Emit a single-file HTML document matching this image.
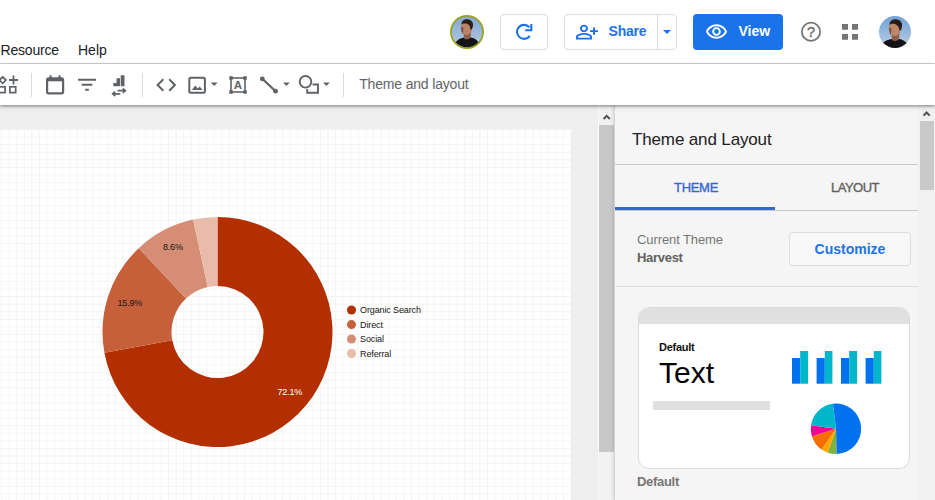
<!DOCTYPE html>
<html>
<head>
<meta charset="utf-8">
<title>Theme and Layout</title>
<style>
*{box-sizing:border-box;margin:0;padding:0}
html,body{width:935px;height:500px;overflow:hidden;background:#fff;font-family:"Liberation Sans",sans-serif;}
#root{position:relative;width:935px;height:500px;overflow:hidden;background:#fff}
.abs{position:absolute}
#topbar{left:0;top:0;width:935px;height:64px;background:#fff;border-bottom:1px solid #dadce0}
.menu{top:42.400px;font-size:14px;color:#202124;line-height:16px;white-space:nowrap}
#toolbar{left:0;top:64px;width:935px;height:41px;background:#fff;box-shadow:0 1px 3px rgba(0,0,0,.45),0 2px 6px rgba(0,0,0,.08);z-index:5}
.sep{width:1px;background:#dadce0;top:9px;height:24px}
#work{left:0;top:105px;width:599px;height:395px;background:#eeeeee}
#canvas{left:0;top:129px;width:571px;height:371px;background-color:#fff;
 background-image:linear-gradient(#f4f4f4 1px,transparent 1px),linear-gradient(90deg,#f4f4f4 1px,transparent 1px);
 background-size:7.600px 7.600px;background-position:1px 0}
#vscroll{left:598px;top:105px;width:16px;height:395px;background:#f1f1f1;border-left:1px solid #fafafa}
#vthumb{left:599px;top:125px;width:15px;height:327px;background:#c8c8c8}
#panel{left:614px;top:105px;width:304px;height:395px;background:#f5f5f5;border-left:1px solid #d4d4d4;box-shadow:-1px 0 3px rgba(0,0,0,.12)}
#pscroll{left:918px;top:105px;width:17px;height:395px;background:#f1f1f1}
#pthumb{left:919.500px;top:121px;width:14.200px;height:68.600px;background:#c9c9c9}
.btn{border:1px solid #dadce0;border-radius:4px;background:#fff}
</style>
</head>
<body>
<div id="root">
  <div id="topbar" class="abs"></div>
  <div class="abs menu" style="left:0.500px;letter-spacing:-0.200px">Resource</div>
  <div class="abs menu" style="left:78px">Help</div>

  <!-- avatar 1 -->
  <svg class="abs" style="left:450px;top:15px" width="34" height="34" viewBox="0 0 34 34">
    <defs>
      <linearGradient id="sky1" x1="0" y1="0" x2="0" y2="1"><stop offset="0" stop-color="#7fa6d3"/><stop offset="1" stop-color="#b7cbe0"/></linearGradient>
      <clipPath id="c1"><circle cx="17" cy="17" r="15.200"/></clipPath>
    </defs>
    <circle cx="17" cy="17" r="17" fill="#9aa21c"/>
    <g clip-path="url(#c1)">
      <rect width="34" height="34" fill="url(#sky1)"/>
      <path d="M4 34C4 26 9 23.500 14 22.500L21 22.500C27 24 29.500 27 30 34Z" fill="#141416"/>
      <path d="M13.500 17L14 23.500Q17 25.500 20.500 23L21 16Z" fill="#8f5e48"/>
      <ellipse cx="16.500" cy="12.800" rx="5.600" ry="7.200" fill="#b98468"/>
      <path d="M11.400 9.500C11.300 4.500 17 3.200 20.500 5.200C23.800 7 23.500 11 21.800 14.500L20.300 14.500C20.500 12 19.500 10 17 8.800C14.500 8 12.500 8.500 11.400 9.500Z" fill="#2a1d17"/>
      <path d="M11.200 11.500C11 14 11.300 17 12.800 19.200L13.500 13Z" fill="#7a4f3d"/>
    </g>
  </svg>

  <!-- refresh button -->
  <div class="abs btn" style="left:500px;top:14px;width:48px;height:36px"></div>
  <svg class="abs" style="left:512px;top:20px" width="24" height="24" viewBox="512 20 24 24" fill="none" stroke="#1a73e8" stroke-width="2.100"><path d="M529.300 27.300A7 7 0 1 0 529.800 35.800"/><path d="M531.300 24V30.300H525.200"/></svg>

  <!-- share button -->
  <div class="abs btn" style="left:564px;top:14px;width:113px;height:36px"></div>
  <div class="abs" style="left:657px;top:15px;width:1px;height:34px;background:#dadce0"></div>
  <svg class="abs" style="left:575px;top:20.600px" width="24" height="22.200" viewBox="0 0 24 24" preserveAspectRatio="none"><path fill="#1a73e8" d="M9 12c2.21 0 4-1.79 4-4s-1.790-4-4-4-4 1.790-4 4 1.790 4 4 4zm0-6c1.100 0 2 .9 2 2s-.9 2-2 2-2-.9-2-2 .9-2 2-2zm0 7c-2.670 0-8 1.340-8 4v3h16v-3c0-2.660-5.330-4-8-4zm6 5H3v-.99C3.200 16.290 6.300 15 9 15s5.800 1.290 6 2v1zm5-8V7h-2v3h-3v2h3v3h2v-3h3v-2h-3z"/></svg>
  <div class="abs" style="left:608.500px;top:22px;font-size:14px;font-weight:bold;color:#1a73e8;line-height:18px;letter-spacing:-0.200px">Share</div>
  <div class="abs" style="left:663px;top:30px;width:0;height:0;border-left:4px solid transparent;border-right:4px solid transparent;border-top:4px solid #1a73e8"></div>

  <!-- view button -->
  <div class="abs" style="left:693px;top:14px;width:90px;height:36px;border-radius:4px;background:#1a73e8"></div>
  <svg class="abs" style="left:705.400px;top:20.200px" width="23" height="23" viewBox="0 0 24 24"><path fill="#fff" d="M12 6.500c3.790 0 7.170 2.130 8.820 5.500-1.650 3.370-5.020 5.500-8.820 5.500S4.830 15.370 3.180 12C4.830 8.630 8.210 6.500 12 6.500m0-2C7 4.500 2.730 7.610 1 12c1.730 4.390 6 7.500 11 7.500s9.270-3.110 11-7.500c-1.730-4.390-6-7.500-11-7.500zm0 5a2.500 2.500 0 0 1 0 5 2.500 2.500 0 0 1 0-5m0-2c-2.480 0-4.500 2.020-4.500 4.500s2.020 4.500 4.500 4.500 4.500-2.020 4.500-4.500-2.020-4.500-4.500-4.500z"/></svg>
  <div class="abs" style="left:738.500px;top:22px;font-size:14px;font-weight:bold;color:#fff;line-height:18px">View</div>

  <!-- help -->
  <svg class="abs" style="left:799px;top:20px" width="24" height="24" viewBox="799 20 24 24"><circle cx="811" cy="31.700" r="9.100" fill="none" stroke="#757575" stroke-width="1.800"/><text x="811" y="37" text-anchor="middle" font-family="Liberation Sans, sans-serif" font-size="14.500" fill="#757575" stroke="#757575" stroke-width="0.500">?</text></svg>
  <!-- apps -->
  <svg class="abs" style="left:840px;top:22px" width="20" height="20" viewBox="840 22 20 20"><path fill="#757575" d="M842 23.900h6v5.800h-6zM852 23.900h6v5.800h-6zM842 33.900h6v5.800h-6zM852 33.900h6v5.800h-6z"/></svg>

  <!-- avatar 2 -->
  <svg class="abs" style="left:879px;top:16px" width="32" height="32" viewBox="0 0 32 32">
    <defs>
      <linearGradient id="sky2" x1="0" y1="0" x2="0" y2="1"><stop offset="0" stop-color="#6fa2d9"/><stop offset="1" stop-color="#bdd0e2"/></linearGradient>
      <clipPath id="c2"><circle cx="16" cy="16" r="16"/></clipPath>
    </defs>
    <g clip-path="url(#c2)">
      <rect width="32" height="32" fill="url(#sky2)"/>
      <path d="M2 32C2.500 26 7 24 12.500 23L20.500 23C26 24.500 29 27 29.500 32Z" fill="#141416"/>
      <path d="M12.500 17L13 24Q16.500 26 20 23.500L20.500 16Z" fill="#8f5e48"/>
      <ellipse cx="15.800" cy="12.500" rx="5.900" ry="7.600" fill="#bd8869"/>
      <path d="M10.400 9C10.300 3.500 16.500 2 20.300 4.200C23.800 6.200 23.600 10.500 21.800 14.500L20.300 14.500C20.500 12 19.300 9.500 16.500 8.200C13.800 7.400 11.600 8 10.400 9Z" fill="#2a1d17"/>
      <path d="M10.200 11C10 14 10.300 17 11.800 19.500L12.500 13Z" fill="#7a4f3d"/>
    </g>
  </svg>

  <!-- toolbar -->
  <div id="toolbar" class="abs">
    
    <svg class="abs" style="left:0;top:0" width="350" height="41" viewBox="0 0 350 41" fill="none" stroke="#5f6368" stroke-width="2">
      <!-- add chart (partial) -->
      <path d="M2.700 12.900L5.900 16.100L2.700 19.300L-0.500 16.100Z" stroke-width="1.800"/>
      <path d="M13.500 11.500V20.500M9 16H18" stroke-width="1.800"/>
      <rect x="-2" y="22.800" width="7.100" height="5.800" stroke-width="1.700"/>
      <rect x="9.900" y="22.800" width="5.800" height="5.800" stroke-width="1.700"/>
      <!-- calendar -->
      <rect x="47.100" y="14.300" width="16" height="15" rx="1.500" stroke-width="2.200"/>
      <rect x="47.100" y="14.300" width="16" height="3" fill="#5f6368" stroke="none"/>
      <path d="M50.600 11.200V14.500M59.600 11.200V14.500"/>
      <!-- filter -->
      <path d="M78 15.800H96M81.700 20.800H92.300M85.200 25.800H88.800" stroke-width="2.100"/>
      <!-- data control -->
      <path d="M113.300 19h3.200v-4.800h3.500v8.100h-6.700zM120.700 11.200h3.800v11.100h-3.800z" fill="#5f6368" stroke="none"/>
      <path d="M117.500 26.700H124.500M122.800 24.500L125.300 26.700L122.800 28.900M113.500 29.800H120.300M115.200 27.600L112.700 29.800L115.200 32" stroke-width="1.700"/>
      <!-- code -->
      <path d="M163.300 15.300L157.600 21L163.300 26.700M169.200 15.300L174.900 21L169.200 26.700"/>
      <!-- image -->
      <rect x="189.300" y="13.700" width="15.600" height="15" rx="1.500"/>
      <path d="M191.800 26L195.300 21.600L197.800 24.600L199.700 22.600L202.600 26Z" fill="#5f6368" stroke="none"/>
      <path d="M210.800 18.600H217.600L214.200 22Z" fill="#5f6368" stroke="none"/>
      <!-- text box -->
      <rect x="231" y="14" width="14" height="14" stroke-width="1.600"/>
      <path d="M229.300 12.300h3.500v3.500h-3.500zM243.300 12.300h3.500v3.500h-3.500zM229.300 26.300h3.500v3.500h-3.500zM243.300 26.300h3.500v3.500h-3.500z" fill="#5f6368" stroke="none"/>
      <text x="238" y="25.300" font-family="Liberation Sans, sans-serif" font-size="11.500" font-weight="bold" text-anchor="middle" fill="#5f6368" stroke="none">A</text>
      <!-- line -->
      <path d="M262.300 14.800L275.600 27.200" stroke-width="2.200"/>
      <circle cx="262.300" cy="14.800" r="2.400" fill="#5f6368" stroke="none"/>
      <circle cx="275.600" cy="27.200" r="2.400" fill="#5f6368" stroke="none"/>
      <path d="M283 18.600H289.800L286.400 22Z" fill="#5f6368" stroke="none"/>
      <!-- shape -->
      <circle cx="305.500" cy="17.800" r="5.800" stroke-width="1.900"/>
      <path d="M312.500 20.500H318V28.800H307.200V25" stroke-width="1.900"/>
      <path d="M323 18.600H329.800L326.400 22Z" fill="#5f6368" stroke="none"/>
    </svg>
    <div class="abs sep" style="left:31px"></div>
    <div class="abs sep" style="left:142px"></div>
    <div class="abs sep" style="left:343px"></div>
    <div class="abs" style="left:359.200px;top:12px;font-size:14px;color:#5f6368;line-height:16px;white-space:nowrap;letter-spacing:-0.170px">Theme and layout</div>
  </div>

  <!-- workspace -->
  <div id="work" class="abs"></div>
  <div id="canvas" class="abs"></div>
  
  <!-- donut chart -->
  <svg class="abs" style="left:0;top:105px" width="600" height="395" viewBox="0 105 600 395" font-family="Liberation Sans, sans-serif">
    <path fill="#b32f00" d="M217.50 217.00A115 115 0 1 1 104.40 352.840L172.260 340.340A46 46 0 1 0 217.50 286.00Z"/>
    <path fill="#c6603b" d="M104.40 352.840A115 115 0 0 1 138.780 248.170L186.010 298.470A46 46 0 0 0 172.260 340.340Z"/>
    <path fill="#d68d75" d="M138.780 248.170A115 115 0 0 1 193.120 219.610L207.750 287.050A46 46 0 0 0 186.010 298.470Z"/>
    <path fill="#e8bbab" d="M193.120 219.610A115 115 0 0 1 217.50 217.00L217.50 286.00A46 46 0 0 0 207.750 287.050Z"/>
    <text x="163" y="249.600" font-size="9" letter-spacing="-0.2" fill="#151515">8.6%</text>
    <text x="117.500" y="306.400" font-size="9" letter-spacing="-0.2" fill="#151515">15.9%</text>
    <text x="277.500" y="395" font-size="9" letter-spacing="-0.2" fill="#ffffff">72.1%</text>
    <circle cx="351.500" cy="310" r="4.500" fill="#b32f00"/>
    <circle cx="351.500" cy="324.600" r="4.500" fill="#c6603b"/>
    <circle cx="351.500" cy="339" r="4.500" fill="#d68d75"/>
    <circle cx="351.500" cy="353.500" r="4.500" fill="#e8bbab"/>
    <text x="360" y="313" font-size="9" letter-spacing="-0.12" fill="#151515">Organic Search</text>
    <text x="360" y="327.600" font-size="9" letter-spacing="-0.12" fill="#151515">Direct</text>
    <text x="360" y="342" font-size="9" letter-spacing="-0.12" fill="#151515">Social</text>
    <text x="360" y="356.500" font-size="9" letter-spacing="-0.12" fill="#151515">Referral</text>
  </svg>
  <div id="vscroll" class="abs"></div>
  <div id="vthumb" class="abs"></div>
  <div id="panel" class="abs"></div>
  <div id="pscroll" class="abs"></div>
  <div id="pthumb" class="abs"></div>
  <!-- panel contents -->
  <div class="abs" style="left:632px;top:128.500px;font-size:17px;line-height:22px;color:#212121;white-space:nowrap;letter-spacing:-0.140px">Theme and Layout</div>
  <div class="abs" style="left:615px;top:164px;width:303px;height:1px;background:#c8c8c8"></div>
  <div class="abs" style="left:674px;top:180px;font-size:13px;line-height:16px;color:#3367d6;white-space:nowrap;letter-spacing:-0.300px;-webkit-text-stroke:0.350px #3367d6">THEME</div>
  <div class="abs" style="left:831px;top:180px;font-size:13px;line-height:16px;color:#616161;white-space:nowrap;letter-spacing:-0.500px;-webkit-text-stroke:0.350px #616161">LAYOUT</div>
  <div class="abs" style="left:615px;top:210px;width:303px;height:1px;background:#c8c8c8"></div>
  <div class="abs" style="left:615px;top:207px;width:160px;height:3px;background:#3367d6"></div>
  <div class="abs" style="left:637px;top:232px;font-size:13px;line-height:16px;color:#757575;white-space:nowrap;letter-spacing:-0.100px">Current Theme</div>
  <div class="abs" style="left:637px;top:250px;font-size:13px;line-height:16px;font-weight:bold;color:#616161;white-space:nowrap;letter-spacing:-0.300px">Harvest</div>
  <div class="abs" style="left:789px;top:232px;width:122px;height:34px;border:1px solid #dadce0;border-radius:4px;background:#f8f8f8"></div>
  <div class="abs" style="left:789px;top:232px;width:122px;height:34px;line-height:34px;text-align:center;font-size:14px;font-weight:bold;color:#1a73e8">Customize</div>
  <div class="abs" style="left:616px;top:286px;width:302px;height:1px;background:#dcdcdc"></div>

  <!-- theme card -->
  <div class="abs" style="left:638px;top:307px;width:272px;height:162px;border:1px solid #dadada;border-radius:11px;background:#fff;overflow:hidden">
    <div class="abs" style="left:0;top:0;width:272px;height:16px;background:#e0e0e0"></div>
  </div>
  <div class="abs" style="left:659px;top:340px;font-size:11px;line-height:14px;font-weight:bold;color:#111;white-space:nowrap;letter-spacing:-0.250px">Default</div>
  <div class="abs" style="left:659px;top:355px;font-size:30px;line-height:36px;color:#000;white-space:nowrap">Text</div>
  <div class="abs" style="left:653px;top:401px;width:117px;height:9px;background:#e0e0e0"></div>
  <svg class="abs" style="left:780px;top:340px" width="130" height="125" viewBox="780 340 130 125">
    <g fill="#0072f0">
      <rect x="792" y="358" width="8.200" height="25.700"/><rect x="816.600" y="358" width="8.200" height="25.700"/>
      <rect x="841" y="358" width="8.200" height="25.700"/><rect x="865.600" y="358" width="8.200" height="25.700"/>
    </g>
    <g fill="#00b6cb">
      <rect x="800.200" y="351" width="7.900" height="32.700"/><rect x="824.800" y="351" width="7.600" height="32.700"/>
      <rect x="849.200" y="351" width="7.900" height="32.700"/><rect x="873.800" y="351" width="7.600" height="32.700"/>
    </g>
    <path fill="#0072f0" d="M836 428.800L832.930 403.790A25.200 25.200 0 1 1 836.440 454.00Z"/>
    <path fill="#7cb342" d="M836 428.800L836.440 454.00A25.200 25.200 0 0 1 827.800 452.630Z"/>
    <path fill="#ffa800" d="M836 428.800L827.800 452.630A25.200 25.200 0 0 1 821.550 449.440Z"/>
    <path fill="#f66d00" d="M836 428.800L821.550 449.440A25.200 25.200 0 0 1 811.900 436.170Z"/>
    <path fill="#f10096" d="M836 428.800L811.900 436.170A25.200 25.200 0 0 1 811.050 425.290Z"/>
    <path fill="#00b6cb" d="M836 428.800L811.050 425.290A25.200 25.200 0 0 1 832.930 403.790Z"/>
  </svg>
  <div class="abs" style="left:637px;top:474px;font-size:13px;line-height:16px;font-weight:bold;color:#757575;white-space:nowrap;letter-spacing:-0.300px">Default</div>

  <!-- scroll arrows -->
  <svg class="abs" style="left:599px;top:105px" width="16" height="20" viewBox="0 0 16 20"><path d="M4.600 14L7.700 10.900L10.800 14" fill="none" stroke="#505050" stroke-width="2"/></svg>
  <svg class="abs" style="left:919px;top:105px" width="16" height="20" viewBox="0 0 16 20"><path d="M4.500 10.600L7.600 7.500L10.700 10.600" fill="none" stroke="#505050" stroke-width="2"/></svg>

</div>
</body>
</html>
